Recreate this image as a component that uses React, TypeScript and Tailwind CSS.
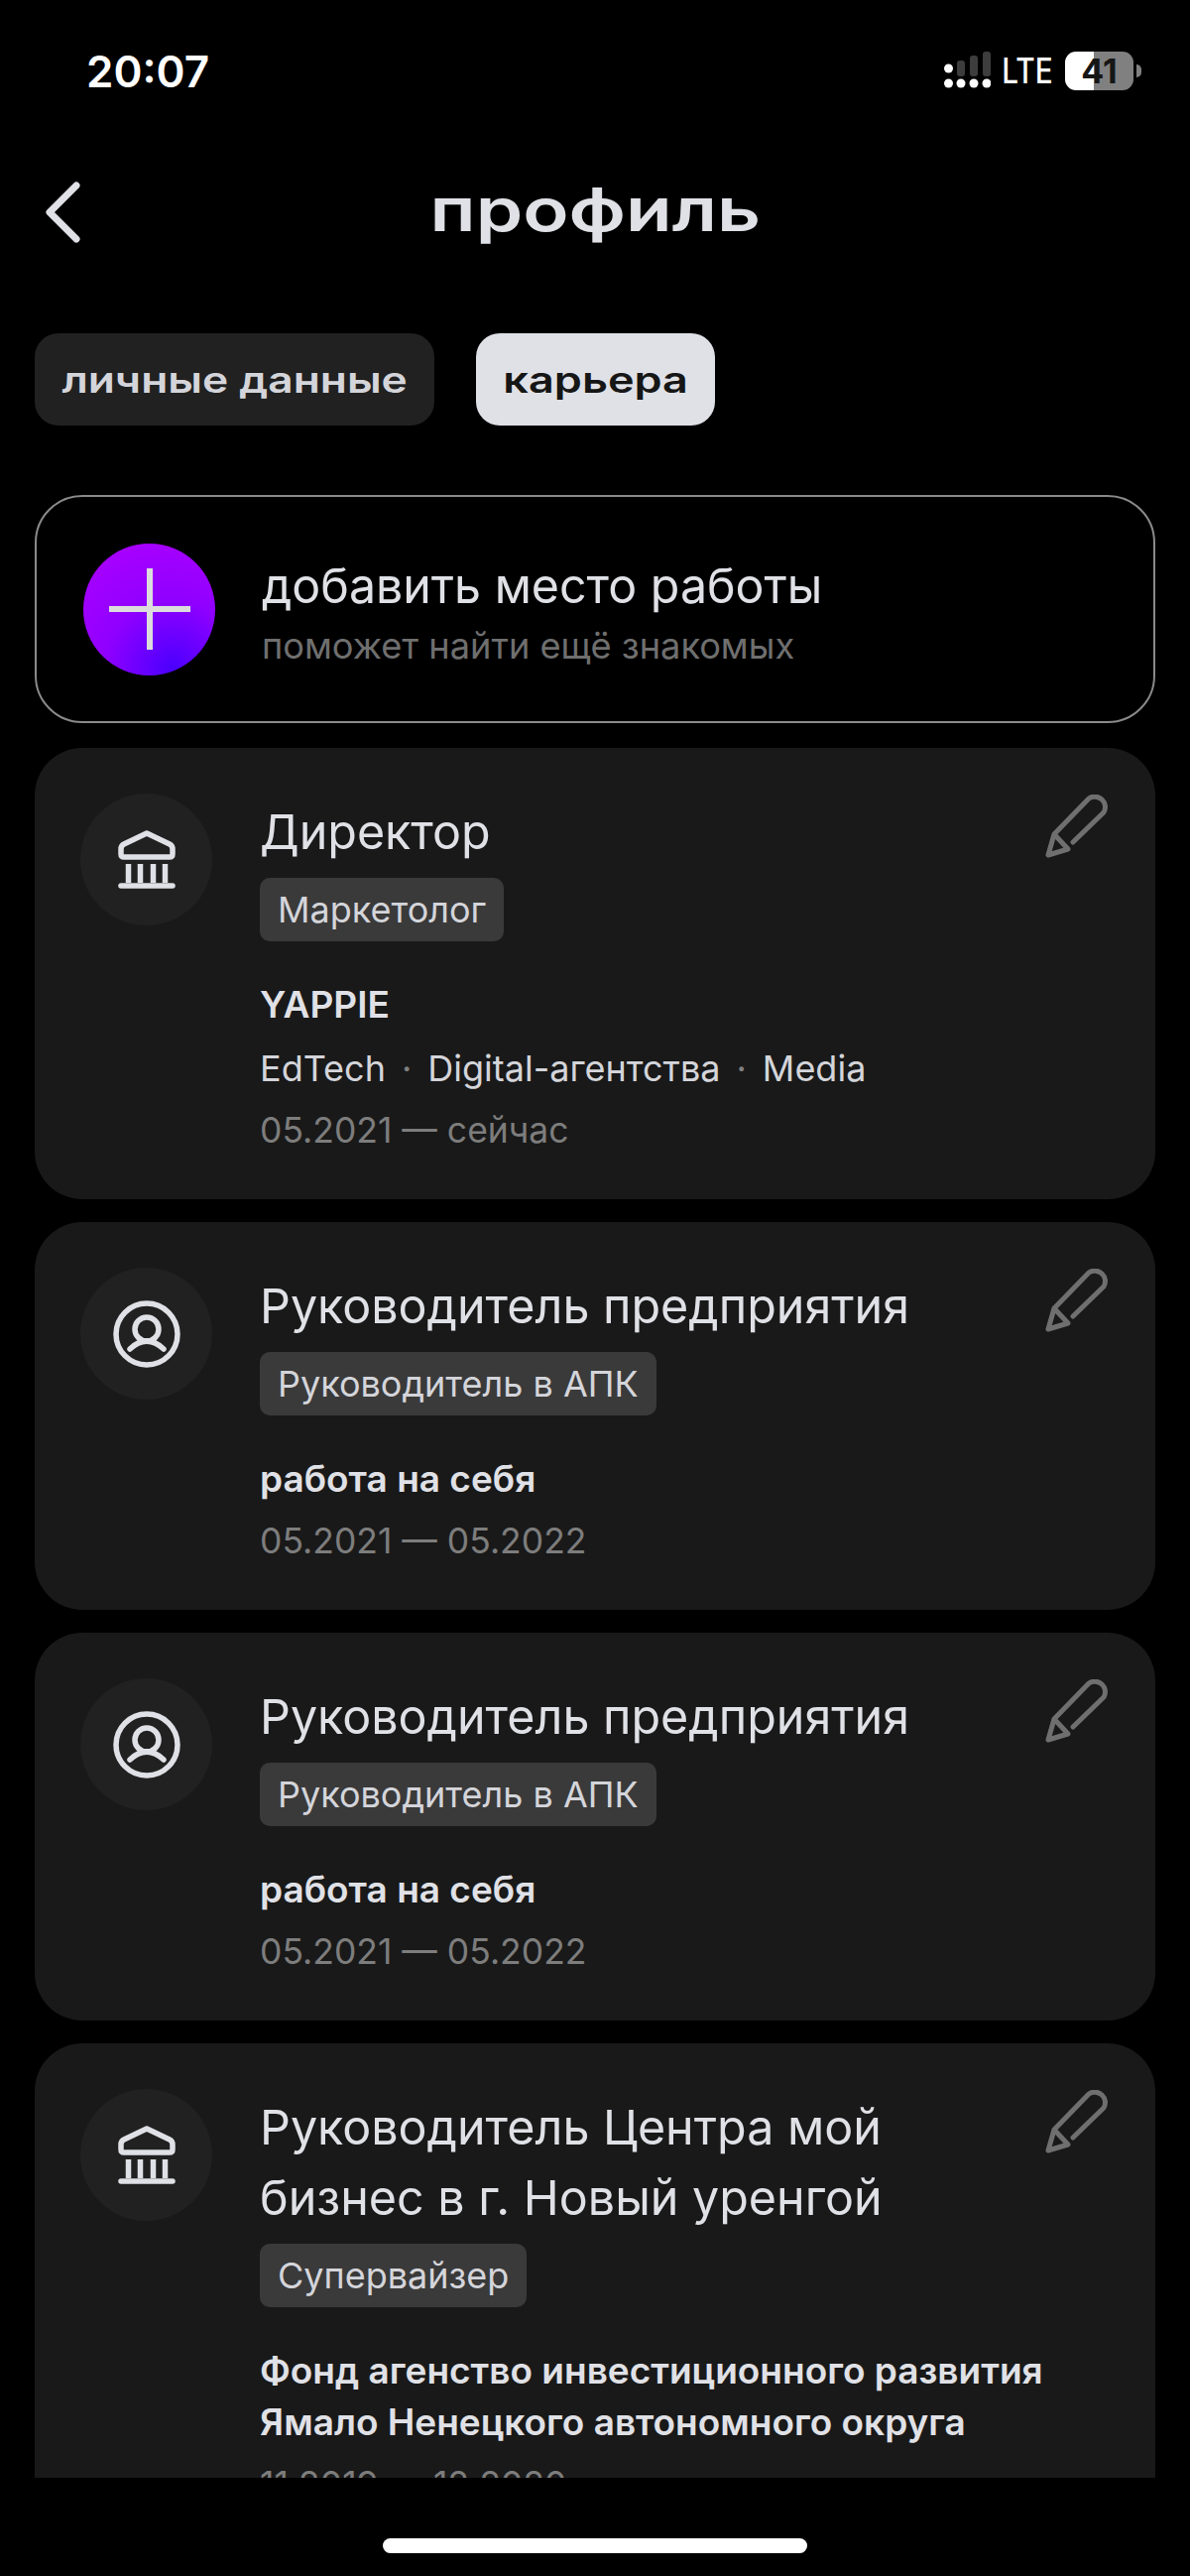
function BankIcon() {
  return (
    <svg width="58" height="60" viewBox="0 0 58 60" fill="none" stroke="#e0e1e6" strokeWidth="5.5" strokeLinecap="round" strokeLinejoin="round">
      <path d="M29 3 L52 14 Q55 15.5 55 19 V24 Q55 27 52 27 H6 Q3 27 3 24 V19 Q3 15.5 6 14 Z" />
      <path d="M10.5 34 V53 M22.5 34 V53 M35.5 34 V53 M47.5 34 V53" strokeLinecap="butt" />
      <path d="M3 56 H55" />
    </svg>
  );
}

function UserIcon() {
  return (
    <svg width="68" height="68" viewBox="0 0 68 68" fill="none" stroke="#e0e1e6" strokeWidth="5.5" strokeLinecap="round">
      <circle cx="34" cy="34" r="31" />
      <circle cx="34" cy="29" r="12" />
      <path d="M17 49 Q34 33 51 49" />
    </svg>
  );
}

function PencilIcon() {
  return (
    <svg className="shrink-0 mt-[1px]" width="65" height="64" viewBox="0 0 65 64" fill="none" stroke="#6f6f6f" strokeWidth="5" strokeLinecap="round" strokeLinejoin="round">
      <path d="M28 48 L59 18 A 10.5 10.5 0 0 0 44 4 L9 40 L3 61 L23 55 L9 40" />
    </svg>
  );
}

function Signal() {
  return (
    <svg width="47" height="42" viewBox="0 0 47 42">
      <rect x="13" y="11" width="8" height="16" rx="3" fill="#3d3d3d" />
      <rect x="26" y="6" width="8" height="21" rx="3" fill="#3d3d3d" />
      <rect x="39" y="2" width="8" height="25" rx="3" fill="#3d3d3d" />
      <circle cx="4.5" cy="19" r="4.5" fill="#fff" />
      <circle cx="4.5" cy="34" r="4.5" fill="#fff" />
      <circle cx="17" cy="34" r="4.5" fill="#fff" />
      <circle cx="30" cy="34" r="4.5" fill="#fff" />
      <circle cx="43" cy="34" r="4.5" fill="#fff" />
    </svg>
  );
}

interface Job {
  icon: "bank" | "user";
  title: string;
  badge: string;
  org: string;
  tags?: string[];
  period: string;
}

const JOBS: Job[] = [
  { icon: "bank", title: "Директор", badge: "Маркетолог", org: "YAPPIE", tags: ["EdTech", "Digital-агентства", "Media"], period: "05.2021 — сейчас" },
  { icon: "user", title: "Руководитель предприятия", badge: "Руководитель в АПК", org: "работа на себя", period: "05.2021 — 05.2022" },
  { icon: "user", title: "Руководитель предприятия", badge: "Руководитель в АПК", org: "работа на себя", period: "05.2021 — 05.2022" },
  {
    icon: "bank",
    title: "Руководитель Центра мой бизнес в г. Новый уренгой",
    badge: "Супервайзер",
    org: "Фонд агенство инвестиционного развития Ямало Ненецкого автономного округа",
    period: "11.2019 — 12.2020",
  },
];

function JobCard({ job }: { job: Job }) {
  return (
    <div className="shrink-0 flex items-start bg-[#191919] rounded-[48px] pt-[46px] pb-[43px] pl-[46px] pr-[46px]">
      <div className="shrink-0 w-[133px] h-[133px] rounded-full bg-[#212121] flex items-center justify-center">
        {job.icon === "bank" ? <BankIcon /> : <UserIcon />}
      </div>
      <div className="flex-1 min-w-0 ml-[48px] pt-[3px]">
        <div className="text-[48.4px] leading-[71px] text-[#e0e1e6] pr-[40px]">{job.title}</div>
        <div className="mt-[11px] inline-flex items-center h-[64px] px-[18px] rounded-[10px] bg-[#3a3a3a] text-[36px] text-[#d4d5da]">
          {job.badge}
        </div>
        <div className="mt-[38px] text-[37px] leading-[52px] font-semibold text-[#e0e1e6]">{job.org}</div>
        {job.tags && (
          <div className="mt-[12px] flex items-center text-[36px] leading-[52px] text-[#d4d5da]">
            {job.tags.map((t, i) => (
              <span key={t} className="flex items-center">
                {i > 0 && <span className="mx-[16px] text-[#808080]">·</span>}
                {t}
              </span>
            ))}
          </div>
        )}
        <div className="mt-[11px] text-[35.5px] leading-[52px] text-[#7d7d7d]">{job.period}</div>
      </div>
      <PencilIcon />
    </div>
  );
}

export default function App() {
  return (
    <div className="w-[1200px] h-[2597px] bg-black overflow-hidden font-['Inter','Noto_Sans',sans-serif]">
      {/* статус-бар */}
      <div className="h-[170px] pt-[46px] pl-[87px] pr-[49px] flex items-start justify-between">
        <span className="text-[44px] leading-[52px] font-semibold text-white">20:07</span>
        <div className="flex items-center mt-[4px]">
          <Signal />
          <span className="ml-[12px] w-[50px] flex justify-center text-[35px] leading-[42px] font-medium text-white scale-x-[0.85]">LTE</span>
          <div className="ml-[13px] w-[69px] h-[39px] rounded-[11px] bg-[linear-gradient(90deg,#ffffff_42%,#808080_42%)] flex items-center justify-center text-[34px] font-bold text-[#161616]">
            41
          </div>
          <div className="ml-[3px] w-[5px] h-[13px] rounded-r-full bg-[#808080]" />
        </div>
      </div>

      {/* шапка */}
      <div className="h-[88px] px-[35px] grid grid-cols-[1fr_auto_1fr] items-center">
        <svg width="48" height="64" viewBox="0 0 48 64" fill="none" stroke="#e0e1e6" strokeWidth="7" strokeLinecap="round" strokeLinejoin="round">
          <path d="M42 5 L15 32 L42 59" />
        </svg>
        <span className="mb-[6px] text-[60px] leading-[82px] font-semibold text-[#e0e1e6] scale-x-[1.27]">профиль</span>
        <span />
      </div>

      <div className="px-[35px]">
        {/* табы */}
        <div className="mt-[78px] flex gap-[42px]">
          <div className="w-[403px] h-[93px] rounded-[24px] bg-[#212121] flex items-center justify-center">
            <span className="text-[36px] font-semibold text-[#d4d5da] scale-x-[1.23]">личные данные</span>
          </div>
          <div className="w-[241px] h-[93px] rounded-[24px] bg-[#e0e1e6] flex items-center justify-center">
            <span className="text-[36px] font-semibold text-[#161616] scale-x-[1.25]">карьера</span>
          </div>
        </div>

        {/* добавить */}
        <div className="mt-[70px] h-[230px] rounded-[48px] border-2 border-[#8a8a8a] flex items-center pl-[47px]">
          <div className="shrink-0 w-[133px] h-[133px] rounded-full bg-[radial-gradient(circle_at_68%_95%,#4a00ff,#9000ff_45%,#b000ff)] flex items-center justify-center">
            <svg width="82" height="82" viewBox="0 0 82 82" stroke="#dcdcdc" strokeWidth="6">
              <path d="M41 0 V82 M0 41 H82" />
            </svg>
          </div>
          <div className="ml-[47px] pt-[8px]">
            <div className="text-[48.3px] leading-[60px] text-[#e0e1e6]">добавить место работы</div>
            <div className="mt-[6px] text-[36.2px] leading-[48px] text-[#6f6f6f]">поможет найти ещё знакомых</div>
          </div>
        </div>

        {/* места работы */}
        <div className="mt-[25px] h-[1744px] overflow-hidden flex flex-col gap-[23px]">
          {JOBS.map((job, i) => (
            <JobCard key={i} job={job} />
          ))}
        </div>

        <div className="mt-[61px] mx-auto w-[428px] h-[15px] rounded-full bg-white" />
      </div>
    </div>
  );
}
